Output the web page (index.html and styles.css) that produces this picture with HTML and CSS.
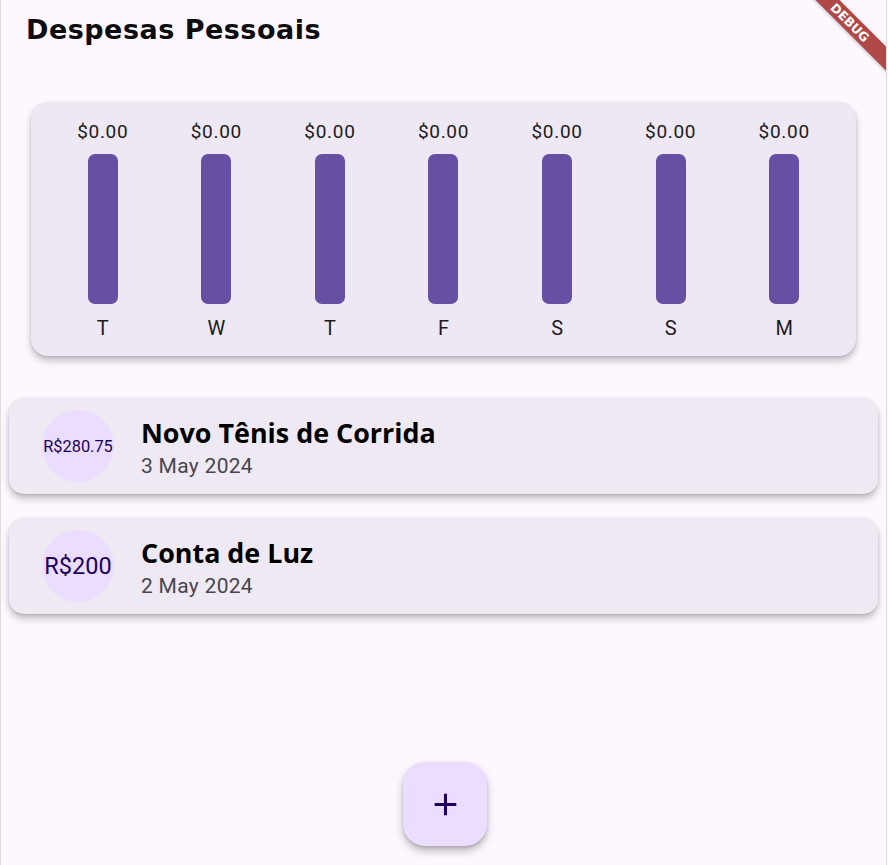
FILE: index.html
```html
<!DOCTYPE html>
<html lang="pt">
<head>
<meta charset="utf-8">
<title>Despesas Pessoais</title>
<link rel="stylesheet" href="styles.css">
</head>
<body>
<div class="app">
  <header class="appbar">
    <h1 class="appbar-title">Despesas Pessoais</h1>
  </header>

  <main class="content">
    <section class="chart-card">
      <div class="chart-col">
        <span class="chart-value">$0.00</span>
        <div class="chart-bar"></div>
        <span class="chart-day">T</span>
      </div>
      <div class="chart-col">
        <span class="chart-value">$0.00</span>
        <div class="chart-bar"></div>
        <span class="chart-day">W</span>
      </div>
      <div class="chart-col">
        <span class="chart-value">$0.00</span>
        <div class="chart-bar"></div>
        <span class="chart-day">T</span>
      </div>
      <div class="chart-col">
        <span class="chart-value">$0.00</span>
        <div class="chart-bar"></div>
        <span class="chart-day">F</span>
      </div>
      <div class="chart-col">
        <span class="chart-value">$0.00</span>
        <div class="chart-bar"></div>
        <span class="chart-day">S</span>
      </div>
      <div class="chart-col">
        <span class="chart-value">$0.00</span>
        <div class="chart-bar"></div>
        <span class="chart-day">S</span>
      </div>
      <div class="chart-col">
        <span class="chart-value">$0.00</span>
        <div class="chart-bar"></div>
        <span class="chart-day">M</span>
      </div>
    </section>

    <ul class="tx-list">
      <li class="tx-card">
        <div class="tx-avatar"><span class="tx-amount tx-amount-small">R$280.75</span></div>
        <div class="tx-text">
          <span class="tx-title">Novo Tênis de Corrida</span>
          <span class="tx-date">3 May 2024</span>
        </div>
      </li>
      <li class="tx-card">
        <div class="tx-avatar"><span class="tx-amount tx-amount-large">R$200</span></div>
        <div class="tx-text">
          <span class="tx-title">Conta de Luz</span>
          <span class="tx-date">2 May 2024</span>
        </div>
      </li>
    </ul>
  </main>

  <button class="fab" type="button" aria-label="Adicionar">
    <svg class="fab-icon" viewBox="0 0 24 24" width="37" height="37"><path d="M19 13h-6v6h-2v-6H5v-2h6V5h2v6h6v2z"/></svg>
  </button>

  <div class="debug-banner"><span>DEBUG</span></div>
</div>
</body>
</html>
```

FILE: styles.css
```css
html, body {
  margin: 0;
  padding: 0;
  height: 100%;
  overflow: hidden;
  background: #fef7ff;
}

.app {
  position: relative;
  width: 885px;
  height: 865px;
  border-left: 1px solid #dcdcdc;
  border-right: 1px solid #dcdcdc;
  background: #fef7ff;
  overflow: hidden;
  font-family: Roboto, "Noto Sans", sans-serif;
  color: #1d1b20;
}

.appbar {
  height: 60px;
  display: flex;
  align-items: center;
  padding-left: 25px;
}

.appbar-title {
  margin: 0;
  font-family: "DejaVu Sans", Inter, sans-serif;
  font-weight: 700;
  font-size: 27px;
  line-height: 32px;
  color: #0d0c0e;
  letter-spacing: 0.5px;
}

.content {
  padding-top: 42px;
}

.chart-card {
  margin: 0 30px;
  padding: 18px 15px 16px;
  background: #ede8f3;
  border-radius: 17px;
  box-shadow: 0 5px 7px rgba(0, 0, 0, 0.22), 0 1px 3px rgba(0, 0, 0, 0.12);
  display: grid;
  grid-template-columns: repeat(7, 1fr);
}

.chart-col {
  display: flex;
  flex-direction: column;
  align-items: center;
}

.chart-value {
  font-size: 19px;
  line-height: 24px;
  letter-spacing: 0.7px;
  color: #1d1b20;
}

.chart-bar {
  width: 30px;
  height: 150px;
  margin-top: 10px;
  border-radius: 7px;
  background: #6750a4;
}

.chart-day {
  margin-top: 12px;
  font-size: 20px;
  line-height: 24px;
  color: #1d1b20;
}

.tx-list {
  list-style: none;
  margin: 42px 0 0;
  padding: 0;
  display: flex;
  flex-direction: column;
  gap: 24px;
}

.tx-card {
  margin: 0 8px;
  height: 96px;
  display: flex;
  align-items: center;
  padding-left: 33px;
  background: #eee9f2;
  border-radius: 15px;
  box-shadow: 0 5px 7px rgba(0, 0, 0, 0.22), 0 1px 3px rgba(0, 0, 0, 0.12);
}

.tx-avatar {
  width: 72px;
  height: 72px;
  flex: none;
  border-radius: 50%;
  background: #eaddff;
  display: flex;
  align-items: center;
  justify-content: center;
}

.tx-amount {
  color: #21005d;
  white-space: nowrap;
}

.tx-amount-small {
  font-size: 16.4px;
}

.tx-amount-large {
  font-size: 23.5px;
}

.tx-text {
  margin-left: 27px;
  margin-top: 4px;
  display: flex;
  flex-direction: column;
}

.tx-title {
  font-family: "Open Sans", sans-serif;
  font-weight: 700;
  font-size: 26.9px;
  line-height: 32px;
  color: #000;
}

.tx-date {
  margin-top: 3px;
  font-size: 21px;
  line-height: 28px;
  letter-spacing: 0.3px;
  color: #49454f;
}

.fab {
  position: absolute;
  left: 402px;
  top: 762px;
  width: 84px;
  height: 84px;
  border: none;
  padding: 0;
  border-radius: 22px;
  background: #eaddff;
  box-shadow: 0 5px 8px rgba(0, 0, 0, 0.25), 0 2px 3px rgba(0, 0, 0, 0.12);
  display: flex;
  align-items: center;
  justify-content: center;
}

.fab-icon {
  fill: #21005d;
}

.debug-banner {
  position: absolute;
  left: 769px;
  top: 14px;
  width: 160px;
  height: 17px;
  transform: rotate(45deg);
  background: #b14848;
  box-shadow: 0 1px 3px rgba(0, 0, 0, 0.25);
  display: flex;
  align-items: center;
  justify-content: center;
}

.debug-banner span {
  font-family: "DejaVu Sans", "Liberation Sans", sans-serif;
  font-weight: 700;
  font-size: 12.5px;
  line-height: 17px;
  color: #fff;
}
```
